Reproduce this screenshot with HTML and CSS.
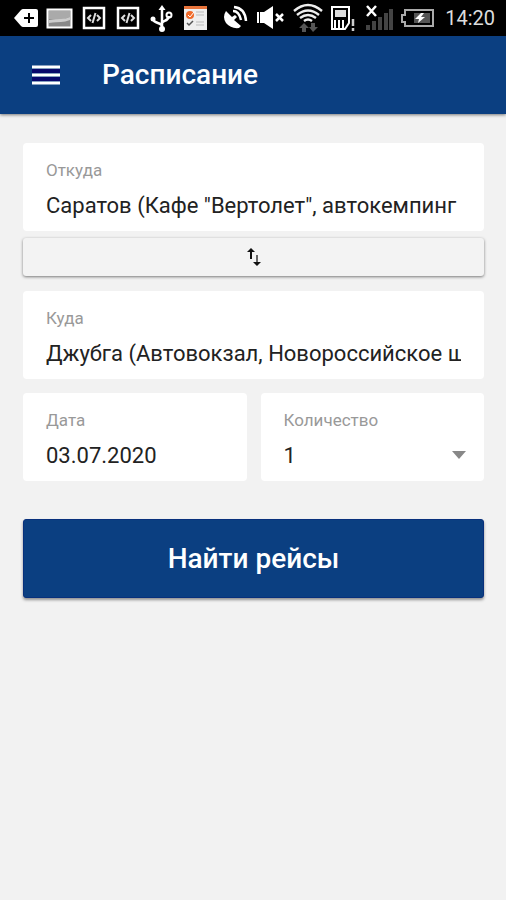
FILE: index.html
```html
<!DOCTYPE html>
<html lang="ru">
<head>
<meta charset="utf-8">
<meta name="viewport" content="width=device-width, initial-scale=1">
<title>Расписание</title>
<link rel="stylesheet" href="styles.css">
</head>
<body>
<div class="status">
  <div class="status-group notes" aria-hidden="true">
    <svg viewBox="0 0 34 36"><path d="M5 18l7-8q1-1 2-1h13q2 0 2 2v14q0 2-2 2H14q-1 0-2-1z" fill="#fff"/><path d="M20 13v10M15 18h10" stroke="#000" stroke-width="2"/></svg>
    <svg viewBox="0 0 34 36"><path d="M4.500 9.500h24v18h-24z" fill="#888" stroke="#fff" stroke-width="2"/><path d="M6 11h21v6l-9 3-12-1z" fill="#aaa"/><path d="M6 20q7-1 12-1t9-2v3q-5 2-9 2t-12 1z" fill="#ccc"/></svg>
    <svg viewBox="0 0 34 36"><path d="M7 8h20v20H7z" fill="none" stroke="#fff" stroke-width="2.500"/><path d="M14 15l-3 3 3 3M20 15l3 3-3 3M18.500 13l-3 10" fill="none" stroke="#ddd" stroke-width="2"/></svg>
    <svg viewBox="0 0 34 36"><path d="M7 8h20v20H7z" fill="none" stroke="#fff" stroke-width="2.500"/><path d="M14 15l-3 3 3 3M20 15l3 3-3 3M18.500 13l-3 10" fill="none" stroke="#ddd" stroke-width="2"/></svg>
    <svg viewBox="0 0 34 36"><path d="M17 9v19M17 26c-1-4-8-2-9-7M17 23c1-3 6-1 7-7" fill="none" stroke="#fff" stroke-width="2.500"/><path d="M17 5l3.500 5h-7z" fill="#fff"/><circle cx="17" cy="29" r="3" fill="#fff"/><circle cx="8" cy="19" r="2.500" fill="#fff"/><circle cx="24" cy="15" r="2.500" fill="none" stroke="#fff" stroke-width="2"/></svg>
    <svg viewBox="0 0 34 36"><path d="M5 6h23v24H5z" fill="#eee"/><path d="M5 6h23v3H5z" fill="#e8743b"/><circle cx="11" cy="15" r="4" fill="#f06a2a"/><path d="M9 15l2 2 4-5" stroke="#fff" fill="none"/><path d="M17 12h8M17 15h8M17 22h8M17 25h8" stroke="#bbb"/><path d="M8 23l2 2 4-4" stroke="#555" fill="none" stroke-width="1.500"/></svg>
  </div>
  <div class="status-group system">
    <svg viewBox="0 0 36 36"><path d="M8 11q-4 6 0 12 5 6 13 5l2-2-7-6 3-3-2-2-3 2z" fill="#fff"/><path d="M15 11q6 0 8 9M16 7q11 1 12 14" fill="none" stroke="#fff" stroke-width="2.500"/></svg>
    <svg viewBox="0 0 36 36"><path d="M3 12h2v11H3zM6 12h4l9-6v23l-9-6H6z" fill="#fff"/><path d="M22 14l7 7M29 14l-7 7" stroke="#fff" stroke-width="2.500"/></svg>
    <svg viewBox="0 0 36 36"><path d="M4 11q14-12 28 0M7 15q11-9 22 0M10 18q8-6 16 0M14 21q4-3 8 0" fill="none" stroke="#eee" stroke-width="2.400"/><path d="M14 23l5 5h-3v4h-4v-4H9zM23 32l-4-5h2v-4h4v4h3z" fill="#555"/></svg>
    <svg viewBox="0 0 36 36"><path d="M6 7h17v16l-4 6H6z" fill="none" stroke="#fff" stroke-width="2"/><path d="M9 10h11v7H9z" fill="#ddd"/><path d="M9 20v8M13 20v8M17 20v8" stroke="#fff" stroke-width="2"/><path d="M27 19v7M27 28v3" stroke="#ccc" stroke-width="2.500"/></svg>
    <svg viewBox="0 0 36 36"><path d="M4 25h4v5H4zM10 21h4v9h-4zM16 17h4v13h-4zM22 13h4v17h-4zM27 9h4v21h-4z" fill="#444"/><path d="M5 6l9 10M14 6L5 16" stroke="#fff" stroke-width="2.500"/></svg>
    <svg viewBox="0 0 36 36"><path d="M7 10h28v16H7v-4H4v-7h3z" fill="none" stroke="#aaa" stroke-width="2"/><path d="M16 13h16v10H16z" fill="#555"/><path d="M23 13l-6 6h4l-1 4 7-6h-4l3-4z" fill="#fff"/></svg>
    <time class="clock">14:20</time>
  </div>
</div>
<header class="bar">
  <button class="menu" type="button" aria-label="Меню"><svg viewBox="0 0 28 20"><path d="M0 6h28M0 14h28" stroke="#07076b" stroke-width="4"/><path d="M0 2h28M0 10h28M0 18h28" stroke="#fff" stroke-width="3"/></svg></button>
  <h1 class="title">Расписание</h1>
</header>
<main>
  <form class="search">
    <div class="field">
      <label for="from">Откуда</label>
      <input id="from" type="text" value="Саратов (Кафе &quot;Вертолет&quot;, автокемпинг">
    </div>
    <button class="swap" type="button" aria-label="Поменять местами"><svg viewBox="0 0 16 20"><path d="M5 12V4" stroke="#111" stroke-width="2"/><path d="M11 8v8" stroke="#666" stroke-width="2"/><path d="M5 1l4 4H1zM11 19l4-4H7z" fill="#111"/></svg></button>
    <div class="field">
      <label for="to">Куда</label>
      <input id="to" type="text" value="Джубга (Автовокзал, Новороссийское шоссе)">
    </div>
    <div class="pair">
      <div class="field">
        <label for="date">Дата</label>
        <input id="date" type="text" value="03.07.2020">
      </div>
      <div class="field">
        <label for="count">Количество</label>
        <div class="choice">
          <select id="count"><option>1</option><option>2</option><option>3</option></select>
          <svg viewBox="0 0 14 8" aria-hidden="true"><path d="M0 0h14L7 8z" fill="#888"/></svg>
        </div>
      </div>
    </div>
    <button class="submit" type="submit">Найти рейсы</button>
  </form>
</main>
</body>
</html>
```
FILE: styles.css
```css
* { box-sizing: border-box; }
body {
  margin: 0;
  min-height: 100vh;
  background: #f2f2f2;
  color: #222;
  font-family: Roboto, "Liberation Sans", sans-serif;
}
svg { display: block; }
button, input, select { font: inherit; color: inherit; }

.status {
  display: flex;
  justify-content: space-between;
  height: 36px;
  padding: 0 11px 0 9px;
  background: #000;
  color: #ddd;
}
.status-group { display: flex; align-items: center; }
.notes svg { width: 34px; height: 36px; }
.system svg { width: 36px; height: 36px; }
.clock { margin-left: 11px; font-size: 20px; line-height: 38px; }

.bar {
  display: flex;
  align-items: center;
  gap: 42px;
  height: 78px;
  padding: 0 32px;
  background: #0b3f81;
  color: #fff;
  box-shadow: 0 1px 3px rgba(0, 0, 0, 0.5);
}
.menu { padding: 0; border: 0; background: none; }
.menu svg { width: 28px; height: 20px; }
.title { margin: 0; font-size: 28px; font-weight: 500; line-height: 32px; }

.search {
  display: flex;
  flex-direction: column;
  padding: 29px 22px 0 23px;
}
.field {
  min-width: 0;
  height: 88px;
  padding: 16px 23px 0;
  border-radius: 4px;
  background: #fff;
}
.field label {
  display: block;
  color: #999;
  font-size: 17px;
  line-height: 22px;
}
.field input, .field select {
  display: block;
  width: 100%;
  height: 32px;
  margin-top: 8px;
  padding: 0;
  border: 0;
  outline: 0;
  background: none;
  font-size: 22px;
  appearance: none;
}
.swap {
  display: flex;
  align-items: center;
  justify-content: center;
  height: 38px;
  margin: 7px 0 15px;
  padding: 0;
  border: 0;
  border-radius: 3px;
  background: #f3f3f3;
  box-shadow: 0 1px 3px rgba(0, 0, 0, 0.5);
}
.swap svg { width: 16px; height: 20px; }
.pair {
  display: grid;
  grid-template-columns: 1fr 1fr;
  gap: 14px;
  margin-top: 14px;
}
.choice { display: flex; align-items: center; }
.choice svg { flex: none; width: 14px; height: 8px; margin: 8px -5px 0 0; }
.submit {
  height: 79px;
  margin-top: 38px;
  border: 1px solid #08307c;
  border-radius: 3px;
  background: #0b3f81;
  color: #fff;
  font-size: 28px;
  font-weight: 500;
  box-shadow: 0 2px 3px rgba(0, 0, 0, 0.4);
}
```
